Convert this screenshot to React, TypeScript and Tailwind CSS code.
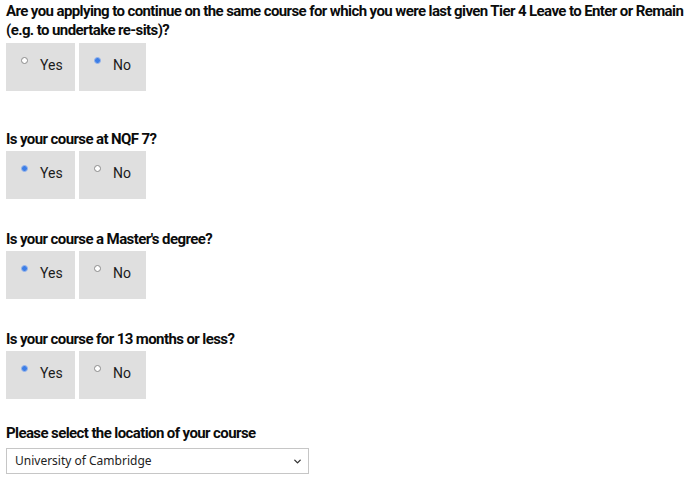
import { ChevronDown } from "lucide-react"

type Question = {
  label: string
  answer: "yes" | "no"
}

const Radio = ({ checked }: { checked: boolean }) => (
  <span
    className={
      checked
        ? "mt-[14px] block h-[7px] w-[7px] shrink-0 rounded-full border border-[#9bb8ec] bg-[#3d7ee6]"
        : "mt-[14px] block h-[7px] w-[7px] shrink-0 rounded-full border border-[#8a8a8a] bg-white"
    }
  />
)

const Option = ({ label, checked }: { label: string; checked: boolean }) => (
  <div className="flex h-[48px] bg-[#dfdfdf] pl-[15px]">
    <Radio checked={checked} />
    <span className="ml-[12px] mt-[13px] text-[14px] leading-[18px] text-[#1b1b1b]">{label}</span>
  </div>
)

const YesNo = ({ answer }: { answer: "yes" | "no" }) => (
  <div className="flex gap-[4px]">
    <div className="w-[69px]">
      <Option label="Yes" checked={answer === "yes"} />
    </div>
    <div className="w-[67px]">
      <Option label="No" checked={answer === "no"} />
    </div>
  </div>
)

const questions: Question[] = [
  { label: "Is your course at NQF 7?", answer: "yes" },
  { label: "Is your course a Master's degree?", answer: "yes" },
  { label: "Is your course for 13 months or less?", answer: "yes" },
]

export default function App() {
  return (
    <div className="h-[481px] w-[692px] bg-white pl-[6px] pt-[2px] text-[#0b0c0c]" style={{ fontFamily: "Roboto, 'Noto Sans', sans-serif" }}>
      <h2 className="text-[15px] font-bold leading-[19px] tracking-[-0.6px]">
        Are you applying to continue on the same course for which you were last given Tier 4 Leave to Enter or Remain (e.g. to undertake re-sits)?
      </h2>
      <div className="mt-[3px]">
        <YesNo answer="no" />
      </div>

      <div className="mt-[39px] flex flex-col gap-[31px]">
        {questions.map((q) => (
          <div key={q.label}>
            <h2 className="mb-[2px] text-[15px] font-bold leading-[19px] tracking-[-0.6px]">{q.label}</h2>
            <YesNo answer={q.answer} />
          </div>
        ))}
      </div>

      <h2 className="mt-[25px] text-[15px] font-bold leading-[19px] tracking-[-0.6px]">
        Please select the location of your course
      </h2>
      <div className="mt-[5px] flex h-[26px] w-[303px] items-center justify-between border border-[#c6c6c6] bg-white pl-[8px] pr-[5px]">
        <span className="text-[12px] text-[#222]" style={{ fontFamily: "'Noto Sans', sans-serif" }}>University of Cambridge</span>
        <ChevronDown className="h-[11px] w-[11px] text-[#333]" strokeWidth={3} />
      </div>
    </div>
  )
}
